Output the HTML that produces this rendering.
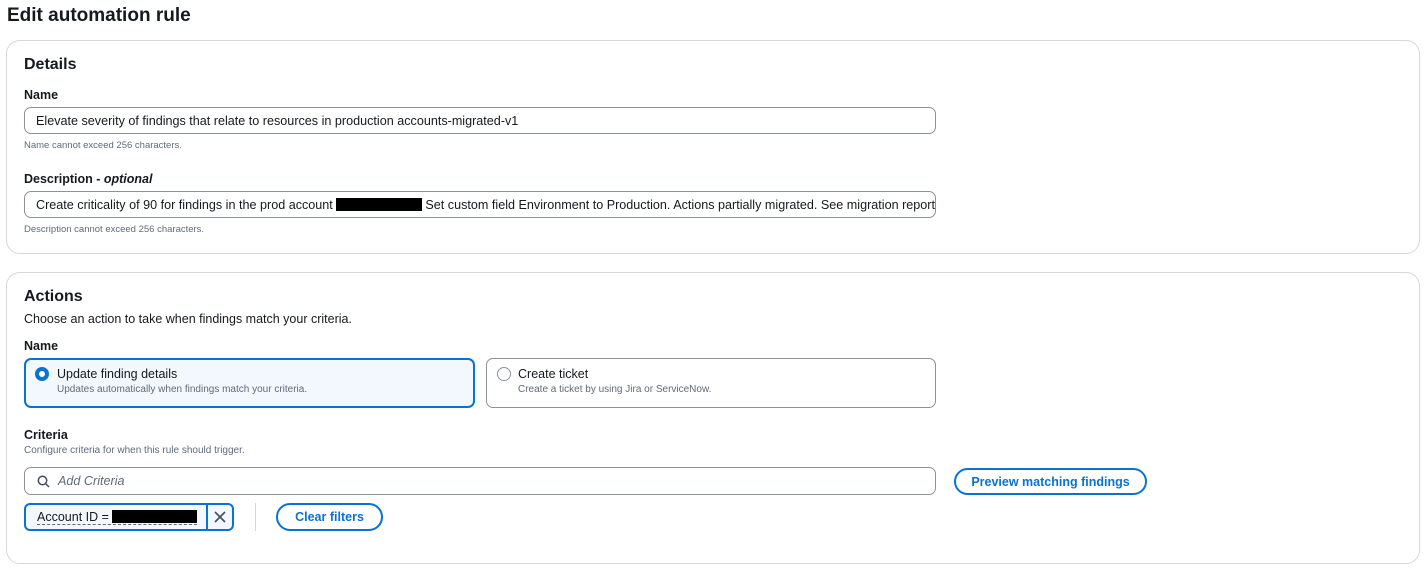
<!DOCTYPE html>
<html><head><style>
*{box-sizing:border-box;margin:0;padding:0}
body{width:1428px;height:574px;background:#fff;font-family:"Liberation Sans",sans-serif;color:#16191f;position:relative;overflow:hidden}
.a{position:absolute}
.box{position:absolute;border:1px solid #d5d7db;border-radius:14px;background:#fff}
.h{font-size:16px;font-weight:bold}
.lbl{font-size:12.5px;font-weight:bold}
.inp{position:absolute;border:1px solid #8d9199;border-radius:7px;font-size:12.6px;padding-left:11px;display:flex;align-items:center;white-space:nowrap;overflow:hidden}
.help{font-size:9.5px;color:#5f6b7a}
.btn{position:absolute;border:2px solid #0972d3;border-radius:16px;color:#0972d3;font-weight:bold;font-size:12.5px;display:flex;align-items:center;justify-content:center}
</style></head><body>
<div class="a" style="left:7px;top:5px;font-size:19px;font-weight:bold">Edit automation rule</div>

<div class="box" style="left:6px;top:40px;width:1414px;height:214px"></div>
<div class="a h" style="left:24px;top:56px">Details</div>
<div class="a lbl" style="left:24px;top:88px">Name</div>
<div class="inp" style="left:24px;top:107px;width:912px;height:27px">Elevate severity of findings that relate to resources in production accounts-migrated-v1</div>
<div class="a help" style="left:24px;top:140px">Name cannot exceed 256 characters.</div>
<div class="a lbl" style="left:24px;top:172px">Description - <i>optional</i></div>
<div class="inp" style="left:24px;top:191px;width:912px;height:27px">Create criticality of 90 for findings in the prod account&nbsp;<span style="display:inline-block;width:89px;height:13px;background:#000"></span>&nbsp;Set custom field Environment to Production. Actions partially migrated. See migration report</div>
<div class="a help" style="left:24px;top:224px">Description cannot exceed 256 characters.</div>

<div class="box" style="left:6px;top:272px;width:1414px;height:292px"></div>
<div class="a h" style="left:24px;top:288px">Actions</div>
<div class="a" style="left:24px;top:312px;font-size:12.5px">Choose an action to take when findings match your criteria.</div>
<div class="a lbl" style="left:24px;top:339px">Name</div>
<div class="a" style="left:24px;top:358px;width:451px;height:50px;border:2px solid #0972d3;border-radius:7px;background:#f2f8fd"></div>
<div class="a" style="left:35px;top:367px;width:14px;height:14px;border-radius:50%;border:4px solid #0972d3;background:#fff"></div>
<div class="a" style="left:57px;top:367px;font-size:12.5px">Update finding details</div>
<div class="a" style="left:57px;top:384px;font-size:10px;color:#5f6b7a">Updates automatically when findings match your criteria.</div>
<div class="a" style="left:486px;top:358px;width:450px;height:50px;border:1px solid #8d9199;border-radius:7px"></div>
<div class="a" style="left:497px;top:367px;width:14px;height:14px;border-radius:50%;border:1px solid #8d9199"></div>
<div class="a" style="left:518px;top:367px;font-size:12.5px">Create ticket</div>
<div class="a" style="left:518px;top:384px;font-size:10px;color:#5f6b7a">Create a ticket by using Jira or ServiceNow.</div>
<div class="a lbl" style="left:24px;top:428px">Criteria</div>
<div class="a" style="left:24px;top:445px;font-size:10px;color:#5f6b7a">Configure criteria for when this rule should trigger.</div>
<div class="inp" style="left:24px;top:467px;width:912px;height:28px;padding-left:12px;color:#5f6b7a;font-style:italic">
<svg width="13" height="13" viewBox="0 0 13 13" style="margin-right:8px"><circle cx="5.5" cy="5.5" r="4.2" fill="none" stroke="#414d5c" stroke-width="1.5"/><path d="M8.5 8.5L12 12" stroke="#414d5c" stroke-width="1.5"/></svg>Add Criteria</div>
<div class="btn" style="left:954px;top:468px;width:193px;height:27px">Preview matching findings</div>
<div class="a" style="left:24px;top:503px;width:210px;height:28px;border:2px solid #0972d3;border-radius:6px;background:#f2f8fd"></div>
<div class="a" style="left:206px;top:503px;width:2px;height:28px;background:#0972d3"></div>
<div class="a" style="left:37px;top:510px;font-size:12.5px;border-bottom:1px dashed #5f6b7a">Account ID = <span style="display:inline-block;width:85px;height:13px;background:#000;vertical-align:-2px"></span></div>
<svg class="a" style="left:213px;top:510px" width="14" height="14" viewBox="0 0 14 14"><path d="M2 2L12 12M12 2L2 12" stroke="#414d5c" stroke-width="1.6"/></svg>
<div class="a" style="left:255px;top:503px;width:1px;height:28px;background:#d5d7db"></div>
<div class="btn" style="left:276px;top:503px;width:107px;height:28px">Clear filters</div>
</body></html>
